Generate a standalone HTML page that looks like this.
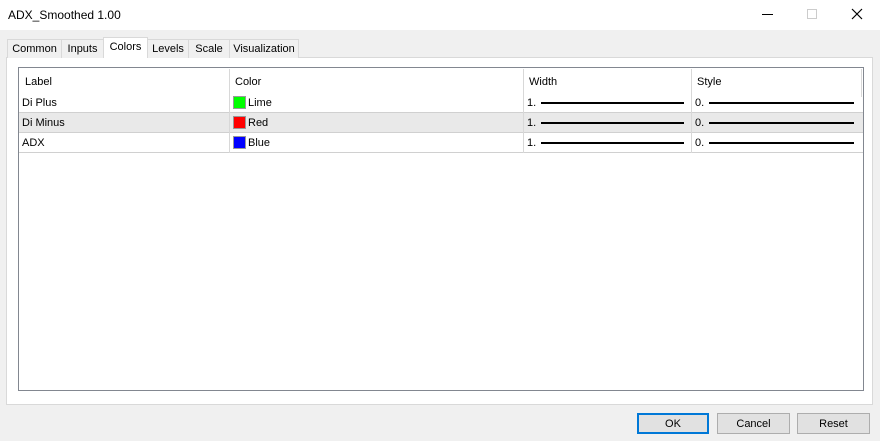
<!DOCTYPE html><html><head><style>
*{margin:0;padding:0;box-sizing:border-box}
body{width:880px;height:441px;background:#f0f0f0;font-family:"Liberation Sans",sans-serif;font-size:11px;color:#000;position:relative;overflow:hidden}
.a{position:absolute}
.title{left:0;top:0;width:880px;height:30px;background:#fff}
.tab{top:39px;height:19px;border:1px solid #d9d9d9;border-bottom:none;background:#f0f0f0;text-align:center;line-height:19px;font-size:11px}
.panel{left:6px;top:57px;width:867px;height:348px;background:#fff;border:1px solid #d9d9d9}
.list{left:18px;top:67px;width:846px;height:324px;border:1px solid #828790;background:#fff}
.row{left:19px;width:844px;height:20px;border-bottom:1px solid #d0d0d0;line-height:19px}
.sep{width:1px;background:#d8d8d8}
.sw{width:13px;height:13px;border:1px solid #999}
.ln{height:1.5px;background:#000}
.btn{top:413px;height:21px;border:1px solid #adadad;background:#e1e1e1;text-align:center;line-height:20px;font-size:11px}
</style></head><body>
<div class="a title"></div>
<div class="a" style="left:8px;top:8px;font-size:12px">ADX_Smoothed 1.00</div>
<div class="a" style="left:762px;top:14px;width:11px;height:1px;background:#000"></div>
<div class="a" style="left:807px;top:9px;width:10px;height:10px;border:1px solid #ccc"></div>
<svg class="a" style="left:851px;top:8px" width="12" height="12"><path d="M1 1L11 11M11 1L1 11" stroke="#000" stroke-width="1.2"/></svg>
<div class="a panel"></div>
<div class="a tab" style="left:7px;width:55px">Common</div>
<div class="a tab" style="left:61px;width:43px">Inputs</div>
<div class="a tab" style="left:147px;width:42px">Levels</div>
<div class="a tab" style="left:188px;width:42px">Scale</div>
<div class="a tab" style="left:229px;width:70px">Visualization</div>
<div class="a tab" style="left:103px;top:37px;width:45px;height:21px;background:#fff;line-height:19px">Colors</div>
<div class="a list"></div>
<div class="a" style="left:25px;top:76px">Label</div>
<div class="a" style="left:235px;top:76px">Color</div>
<div class="a" style="left:529px;top:76px">Width</div>
<div class="a" style="left:697px;top:76px">Style</div>
<div class="a row" style="top:93px"></div>
<div class="a row" style="top:113px;background:#e9e9e9"></div>
<div class="a row" style="top:133px"></div>
<div class="a sep" style="left:229px;top:69px;height:84px"></div>
<div class="a sep" style="left:523px;top:69px;height:84px"></div>
<div class="a sep" style="left:691px;top:69px;height:84px"></div>
<div class="a sep" style="left:861px;top:69px;height:28px"></div>
<div class="a" style="left:22px;top:97px">Di Plus</div>
<div class="a" style="left:22px;top:117px">Di Minus</div>
<div class="a" style="left:22px;top:137px">ADX</div>
<div class="a sw" style="left:233px;top:96px;background:#0f0"></div><div class="a" style="left:248px;top:97px">Lime</div>
<div class="a sw" style="left:233px;top:116px;background:#f00"></div><div class="a" style="left:248px;top:117px">Red</div>
<div class="a sw" style="left:233px;top:136px;background:#00f"></div><div class="a" style="left:248px;top:137px">Blue</div>
<div class="a" style="left:527px;top:97px">1.</div><div class="a ln" style="left:541px;top:102px;width:143px"></div>
<div class="a" style="left:527px;top:117px">1.</div><div class="a ln" style="left:541px;top:122px;width:143px"></div>
<div class="a" style="left:527px;top:137px">1.</div><div class="a ln" style="left:541px;top:142px;width:143px"></div>
<div class="a" style="left:695px;top:97px">0.</div><div class="a ln" style="left:709px;top:102px;width:145px"></div>
<div class="a" style="left:695px;top:117px">0.</div><div class="a ln" style="left:709px;top:122px;width:145px"></div>
<div class="a" style="left:695px;top:137px">0.</div><div class="a ln" style="left:709px;top:142px;width:145px"></div>
<div class="a btn" style="left:637px;width:72px;border:2px solid #0078d7;line-height:18px">OK</div>
<div class="a btn" style="left:717px;width:73px">Cancel</div>
<div class="a btn" style="left:797px;width:73px">Reset</div>
</body></html>
